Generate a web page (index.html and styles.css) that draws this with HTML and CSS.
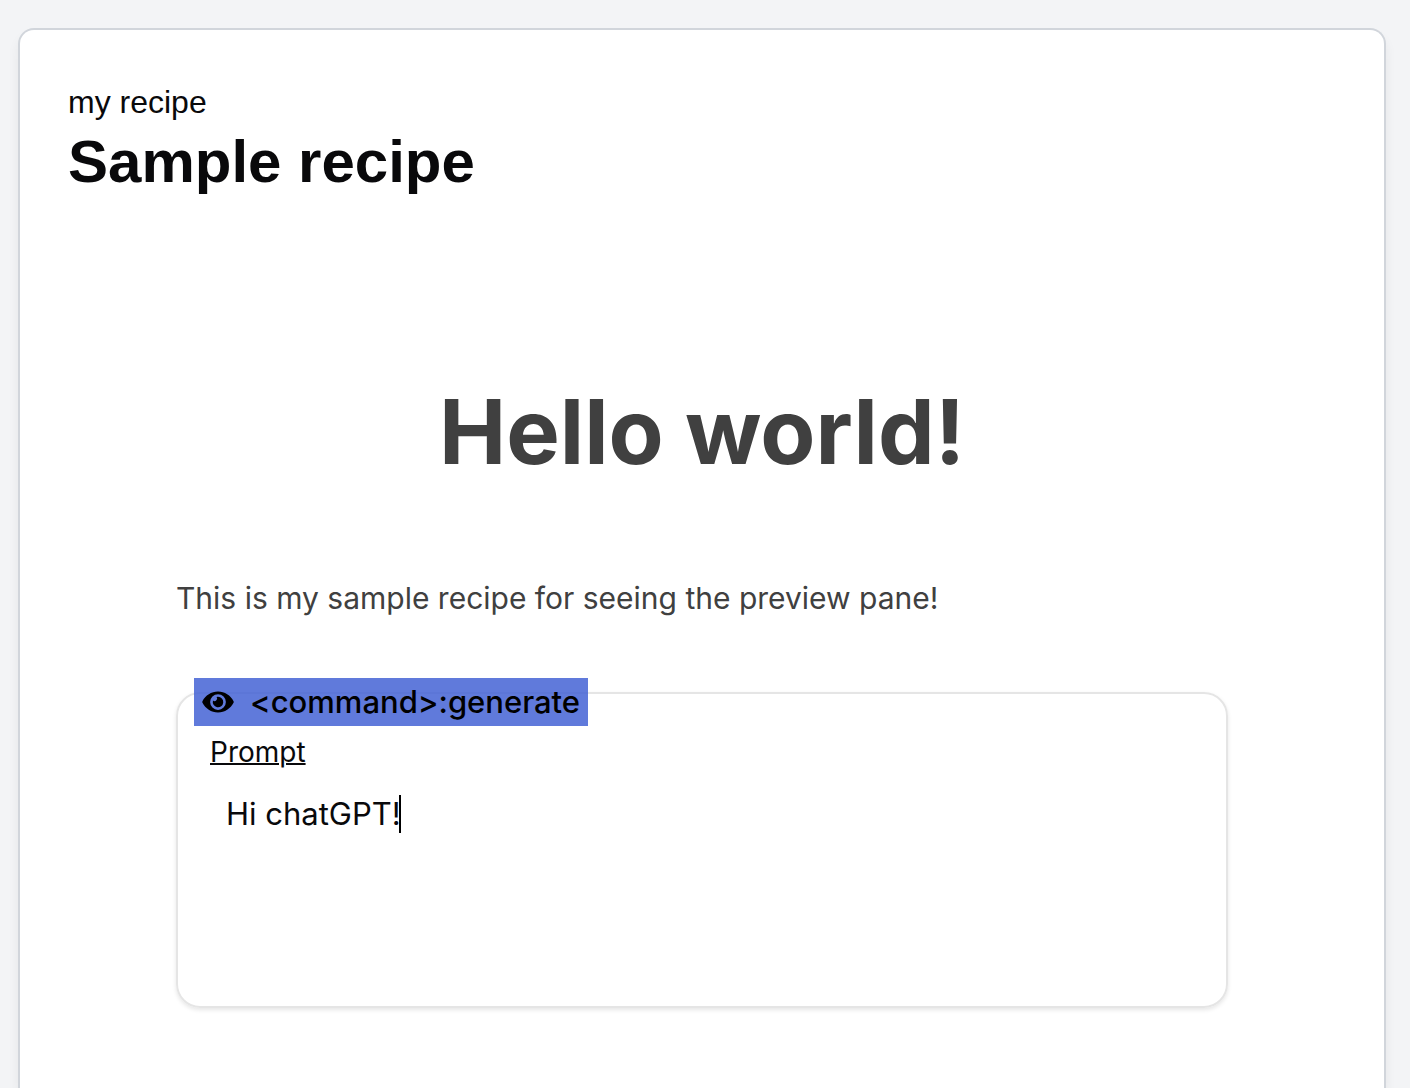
FILE: index.html
```html
<!DOCTYPE html>
<html lang="en">
<head>
  <meta charset="utf-8">
  <meta name="viewport" content="width=device-width, initial-scale=1">
  <title>Sample recipe</title>
  <link rel="stylesheet" href="styles.css">
</head>
<body>
  <main class="card">
    <header class="card-header">
      <p class="eyebrow">my recipe</p>
      <h1 class="title">Sample recipe</h1>
    </header>
    <article class="preview">
      <h2 class="heading">Hello world!</h2>
      <p class="intro">This is my sample recipe for seeing the preview pane!</p>
      <section class="command">
        <button class="command-tag" type="button">
          <svg class="eye" viewBox="0 0 576 512" aria-hidden="true">
            <path d="M572.5 241.400C518.300 135.600 410.900 64 288 64S57.700 135.600 3.500 241.400a32.400 32.400 0 0 0 0 29.200C57.700 376.400 165.100 448 288 448s230.300-71.600 284.500-177.400a32.400 32.400 0 0 0 0-29.200zM288 400a144 144 0 1 1 144-144 143.900 143.900 0 0 1-144 144zm0-240a95.300 95.300 0 0 0-25.300 3.800 47.900 47.900 0 0 1-66.900 66.900A95.800 95.800 0 1 0 288 160z"/>
          </svg>
          <span>&lt;command&gt;:generate</span>
        </button>
        <label class="prompt-label" for="prompt">Prompt</label>
        <div class="prompt-field">
          <textarea class="prompt-input" id="prompt" spellcheck="false">Hi chatGPT!</textarea>
          <span class="caret" aria-hidden="true"></span>
        </div>
      </section>
    </article>
  </main>
</body>
</html>
```
FILE: styles.css
```css
* {
  box-sizing: border-box;
}

body {
  margin: 0;
  padding: 28px 24px 0 18px;
  min-height: 100vh;
  display: flex;
  flex-direction: column;
  background: #f3f4f6;
  color: #09090b;
  font-family: Inter, "Noto Sans", sans-serif;
}

h1,
h2,
p {
  margin: 0;
}

.card {
  flex: 1;
  padding: 48px 48px 80px;
  background: #fff;
  border: 2px solid #d1d5db;
  border-bottom: 0;
  border-radius: 16px 16px 0 0;
  box-shadow: 0 8px 12px rgba(0, 0, 0, 0.06);
}

.card-header {
  font-family: "Liberation Sans", Arial, sans-serif;
}

.eyebrow {
  font-size: 32px;
  line-height: 48px;
}

.title {
  font-size: 60px;
  line-height: 72px;
}

.preview {
  max-width: 1052px;
  margin: 178px auto 0;
  color: #404040;
}

.heading {
  font-size: 90px;
  line-height: 112px;
  text-align: center;
}

.intro {
  margin-top: 82px;
  font-size: 30px;
  line-height: 56px;
}

.command {
  position: relative;
  margin-top: 66px;
  padding: 38px 32px 32px;
  border: 2px solid #e5e5e5;
  border-radius: 24px;
  box-shadow: 0 2px 4px rgba(0, 0, 0, 0.1);
  color: #09090b;
}

.command-tag {
  position: absolute;
  top: -16px;
  left: 16px;
  display: flex;
  align-items: center;
  gap: 16px;
  height: 48px;
  padding: 0 8px;
  border: 0;
  background: rgba(65, 96, 212, 0.84);
  color: #000;
  font: 500 31px/48px Inter, "Noto Sans", sans-serif;
}

.eye {
  width: 32px;
  height: 28px;
  fill: currentColor;
}

.prompt-label {
  display: block;
  font-size: 28px;
  line-height: 40px;
  text-decoration: underline;
  text-decoration-thickness: 2px;
}

.prompt-field {
  position: relative;
}

.prompt-input {
  display: block;
  width: 100%;
  height: 202px;
  padding: 18px 16px;
  border: 0;
  outline: 0;
  resize: none;
  background: transparent;
  color: inherit;
  font: 31px/48px Inter, "Noto Sans", sans-serif;
}

.caret {
  position: absolute;
  top: 23px;
  left: 189px;
  width: 2px;
  height: 38px;
  background: #000;
}
```
